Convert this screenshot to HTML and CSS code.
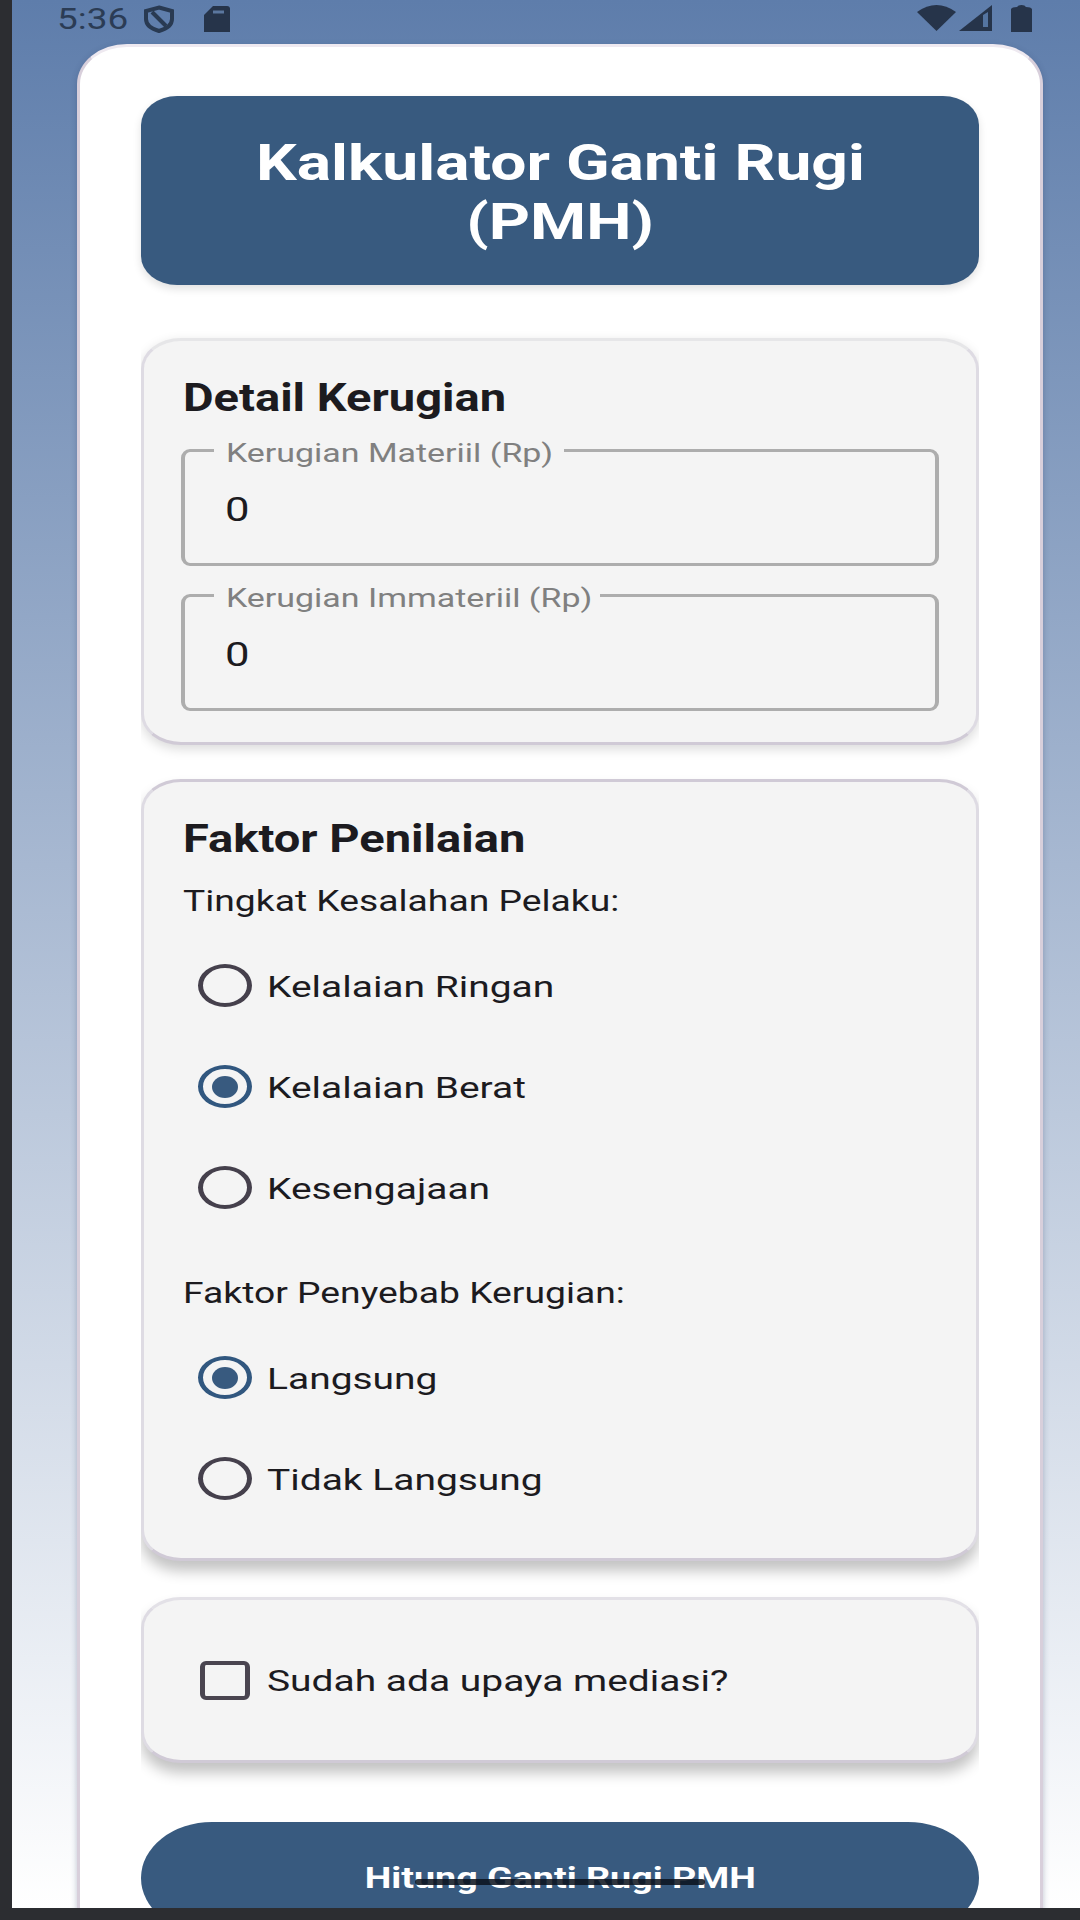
FILE: index.html
```html
<!DOCTYPE html>
<html lang="id">

<head>
  <meta charset="UTF-8">
  <meta name="viewport" content="width=device-width, initial-scale=1.0">
  <title>Kalkulator Ganti Rugi (PMH)</title>
  <link rel="stylesheet" href="styles.css">
</head>

<body>
  <div class="screen">
    <div class="status">
      <span class="txt time">5:36</span>
      <svg class="shield" width="32" height="28" viewBox="0 0 32 28">
        <path d="M16 2.5 L29 6 V14 C29 20 23 24 16 26 C9 24 3 20 3 14 V6 Z" fill="none" stroke="#293a52" stroke-width="4" />
        <path d="M9 7 L23 21" stroke="#293a52" stroke-width="4" />
      </svg>
      <svg class="sd" width="26" height="26" viewBox="0 0 26 26">
        <path d="M9 0 H23 Q26 0 26 3 V26 H0 V9 Z" fill="#26344a" />
        <path d="M9 6 H20" stroke="#5b779f" stroke-width="3" />
      </svg>
      <div class="status_right">
        <svg width="39" height="26" viewBox="0 0 39 26">
          <path d="M0 7 Q19.500 -7 39 7 L19.500 26 Z" fill="#26344a" />
        </svg>
        <svg width="33" height="26" viewBox="0 0 33 26">
          <path d="M33 0 V26 H0 Z" fill="#26344a" />
          <path d="M24 10 L29 7 V22 H24 Z" fill="#5474a0" />
        </svg>
        <svg class="battery" width="21" height="27" viewBox="0 0 21 27">
          <path d="M0 4 Q1 2 6 2 Q7 0 10.500 0 Q14 0 15 2 Q20 2 21 4 V27 H0 Z" fill="#26344a" />
        </svg>
      </div>
    </div>

    <div class="sheet">
      <h1 class="header">
        <span class="txt">Kalkulator Ganti Rugi</span>
        <span class="txt">(PMH)</span>
      </h1>

      <div class="card card_detail">
        <h2><span class="txt">Detail Kerugian</span></h2>
        <fieldset class="field">
          <legend class="legend_materiil"><span class="txt">Kerugian Materiil (Rp)</span></legend>
          <div class="value"><span class="txt">0</span></div>
        </fieldset>
        <fieldset class="field">
          <legend class="legend_immateriil"><span class="txt">Kerugian Immateriil (Rp)</span></legend>
          <div class="value"><span class="txt">0</span></div>
        </fieldset>
      </div>

      <div class="card card_faktor">
        <h2><span class="txt">Faktor Penilaian</span></h2>
        <p><span class="txt">Tingkat Kesalahan Pelaku:</span></p>
        <div class="option"><i class="radio"></i><span class="txt">Kelalaian Ringan</span></div>
        <div class="option"><i class="radio on"></i><span class="txt">Kelalaian Berat</span></div>
        <div class="option"><i class="radio"></i><span class="txt">Kesengajaan</span></div>
        <p class="penyebab"><span class="txt">Faktor Penyebab Kerugian:</span></p>
        <div class="option"><i class="radio on"></i><span class="txt">Langsung</span></div>
        <div class="option"><i class="radio"></i><span class="txt">Tidak Langsung</span></div>
      </div>

      <div class="card card_mediasi">
        <div class="option"><i class="checkbox"></i><span class="txt">Sudah ada upaya mediasi?</span></div>
      </div>

      <div class="button"><span class="txt">Hitung Ganti Rugi PMH</span></div>
    </div>
    <div class="nav_handle"></div>
  </div>
</body>

</html>
```
FILE: styles.css
```css
* {
  box-sizing: border-box;
}

body {
  margin: 0;
  width: 1080px;
  height: 1920px;
  overflow: hidden;
  background: #2c2d31;
  font-family: Roboto, "Liberation Sans", sans-serif;
  color: #1c1b1f;
}

.screen {
  position: relative;
  height: 1908px;
  margin-left: 12px;
  overflow: hidden;
  background: linear-gradient(#5e7dab, #ffffff);
}

/* wide text */
.txt {
  display: inline-block;
  white-space: nowrap;
  transform: scaleX(1.3);
  transform-origin: left center;
}

/* status bar */
.status {
  display: flex;
  height: 44px;
  padding: 5px 48px 0 45px;
}

.time {
  width: 86px;
  font-size: 30px;
  line-height: 27px;
  color: #2b3c55;
  transform: scaleX(1.23);
}

.sd {
  margin: 1px 0 0 29px;
}

.status_right {
  display: flex;
  margin-left: auto;
  gap: 3px;
}

.battery {
  margin-left: 16px;
}

/* white sheet */
.sheet {
  height: 1960px;
  margin: 0 37px 0 65px;
  padding: 49px 61px 0;
  border: 3px solid #d8cfdb;
  border-top-color: #eee9f0;
  border-radius: 50px 50px 0 0 / 40px 40px 0 0;
  background: #ffffff;
  box-shadow: 0 2px 6px rgba(40, 60, 100, 0.3);
}

.header {
  display: flex;
  flex-direction: column;
  align-items: center;
  height: 189px;
  margin: 0;
  padding-top: 38px;
  border-radius: 36px / 29px;
  background: #385a7f;
  box-shadow: 0 4px 8px rgba(0, 0, 0, 0.12);
  color: #ffffff;
  font-size: 50px;
  line-height: 59px;
}

.header .txt {
  transform: scaleX(1.282);
  transform-origin: center;
}

/* cards */
.card {
  padding: 34px 37px 0;
  border: 3px solid #d0cad6;
  border-left-color: #dedbe3;
  border-right-color: #dedbe3;
  border-radius: 40px / 31px;
  background: #f4f4f4;
  box-shadow: 0 10px 14px rgba(0, 0, 0, 0.24);
  /* shadow stops at the side edges */
  clip-path: inset(-10px 0 -40px 0);
}

.card_detail {
  height: 407px;
  margin-top: 53px;
  border-top-color: #e6e6e8;
  box-shadow: 0 4px 12px rgba(0, 0, 0, 0.15);
}

.card_faktor {
  height: 782px;
  margin-top: 34px;
}

.card_mediasi {
  display: flex;
  align-items: center;
  height: 166px;
  margin-top: 36px;
  padding-top: 0;
  border-top-color: #e3e1e7;
}

h2 {
  margin: 0;
  padding-left: 2px;
  font-size: 38px;
  line-height: 46px;
  height: 44px;
}

h2 .txt {
  transform: scaleX(1.239);
}

/* outlined inputs */
.field {
  height: 131px;
  margin: 16px 0 0;
  padding: 0 29px;
  border: 3px solid #adadad;
  border-left-width: 4px;
  border-right-width: 4px;
  border-radius: 9px;
}

.field + .field {
  margin-top: 14px;
}

legend {
  height: 30px;
  padding: 0 0 0 12px;
  font-size: 25px;
  line-height: 37px;
  color: #808080;
}

legend .txt {
  transform: scaleX(1.357);
}

.legend_materiil {
  width: 350px;
}

.legend_immateriil {
  width: 386px;
}

.value {
  margin-top: 25px;
  padding-left: 11px;
  font-size: 33.6px;
  line-height: 40px;
}

/* radio and checkbox rows */
p {
  margin: 23px 0 16px;
  padding-left: 2px;
  font-size: 29.5px;
  line-height: 36px;
}

p .txt {
  transform: scaleX(1.263);
}

.penyebab {
  margin-top: 37px;
}

.option {
  display: flex;
  align-items: center;
  height: 101px;
  padding-left: 17px;
  font-size: 29.5px;
}

.option .txt {
  padding-top: 2px;
  transform: scaleX(1.32);
}

.radio {
  display: flex;
  align-items: center;
  justify-content: center;
  width: 54px;
  height: 43px;
  margin-right: 15px;
  border: solid #45404c;
  border-width: 4px 5px;
  border-radius: 50%;
}

.on {
  border-color: #31577f;
}

.on::after {
  content: '';
  width: 26px;
  height: 22px;
  border-radius: 50%;
  background: #385a7f;
}

.checkbox {
  width: 50px;
  height: 39px;
  margin: 0 17px 0 2px;
  border: solid #4a4550;
  border-width: 4px 5px;
  border-radius: 6px;
}

/* submit */
.button {
  height: 112px;
  margin-top: 59px;
  border-radius: 71px / 56px;
  background: #385a7f;
  color: #ffffff;
  text-align: center;
  font-size: 29.5px;
  font-weight: 700;
  line-height: 112px;
}

.button .txt {
  transform: scaleX(1.276);
  transform-origin: center;
}

.nav_handle {
  position: absolute;
  left: 403px;
  top: 1879px;
  width: 290px;
  height: 6px;
  border-radius: 3px;
  background: rgba(10, 18, 28, 0.85);
}
```
